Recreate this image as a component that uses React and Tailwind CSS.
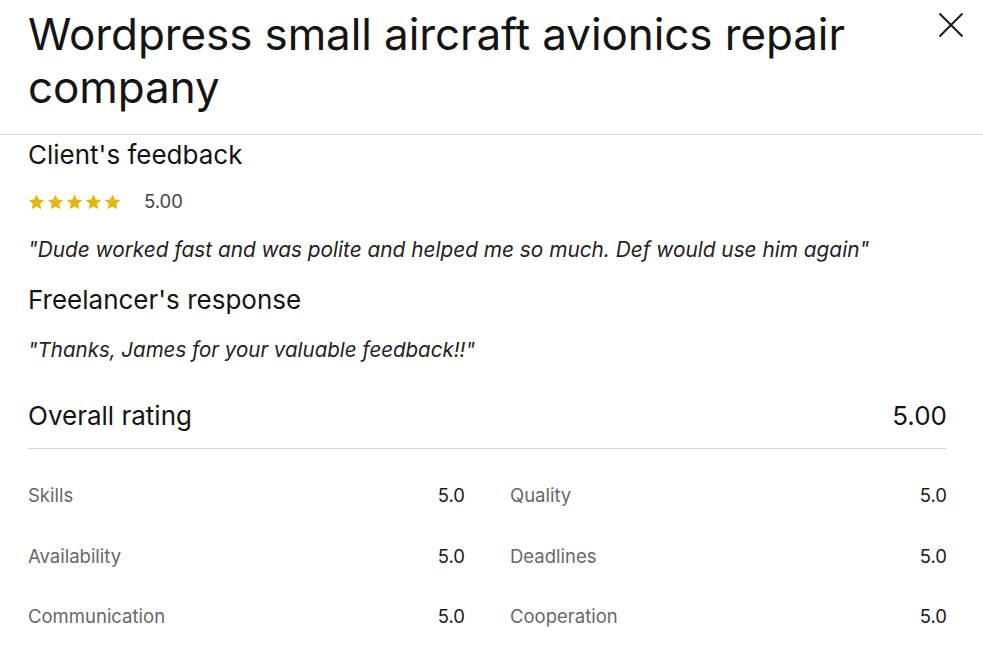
import React from "react";

const Star = () => (
  <svg width="17" height="16" viewBox="0 0 24 23" className="shrink-0">
    <path
      d="M12 0.8l3.3 7.1 7.8 0.9-5.8 5.3 1.6 7.7L12 17.9l-6.9 3.9 1.6-7.7L0.9 8.8l7.8-0.9z"
      fill="#e1b80f"
    />
  </svg>
);

const Row = ({ label, value }) => (
  <div className="flex items-center justify-between h-[60.5px]">
    <span className="text-[18.5px] leading-[26px] text-[#676767]">{label}</span>
    <span className="text-[18.5px] leading-[26px] text-[#1a1a1a]">{value}</span>
  </div>
);

export default function App() {
  return (
    <div
      className="w-[983px] h-[652px] bg-white overflow-hidden text-[#141414]"
      style={{ fontFamily: 'Inter, "Liberation Sans", Arial, sans-serif' }}
    >
      <div className="flex items-start justify-between pl-[28px] pr-[14px] pt-[8px] pb-[20px] border-b border-[#d9d9d9]">
        <h1 className="text-[44px] leading-[53px] tracking-[-0.1px] font-normal text-[#141414] w-[880px]">
          Wordpress small aircraft avionics repair company
        </h1>
        <button className="mt-[-1px] p-1 text-[#141414]">
          <svg width="28" height="28" viewBox="0 0 28 28" fill="none">
            <path d="M2.5 2.5L25.5 25.5M25.5 2.5L2.5 25.5" stroke="#1a1a1a" strokeWidth="2" />
          </svg>
        </button>
      </div>
      <div className="px-[28px] pr-[36px]">
        <h2 className="text-[26px] leading-[30px] mt-[5px]">Client's feedback</h2>
        <div className="flex items-center mt-[19px] gap-[7px]">
          <div className="flex gap-[2px]">
            <Star />
            <Star />
            <Star />
            <Star />
            <Star />
          </div>
          <span className="ml-[16px] text-[18.5px] leading-[25px] text-[#444]">5.00</span>
        </div>
        <p className="italic text-[20.8px] leading-[30px] mt-[21px] text-[#222]">
          "Dude worked fast and was polite and helped me so much. Def would use him again"
        </p>
        <h2 className="text-[26px] leading-[30px] mt-[20px]">Freelancer's response</h2>
        <p className="italic text-[20.5px] leading-[30px] mt-[20px] text-[#222]">
          "Thanks, James for your valuable feedback!!"
        </p>
        <div className="flex items-center justify-between mt-[36px] pb-[17px] border-b border-[#d9d9d9]">
          <span className="text-[26px] leading-[30px]">Overall rating</span>
          <span className="text-[26px] leading-[30px]">5.00</span>
        </div>
        <div className="grid grid-cols-2 gap-x-[45px] mt-[16px]">
          <Row label="Skills" value="5.0" />
          <Row label="Quality" value="5.0" />
          <Row label="Availability" value="5.0" />
          <Row label="Deadlines" value="5.0" />
          <Row label="Communication" value="5.0" />
          <Row label="Cooperation" value="5.0" />
        </div>
      </div>
    </div>
  );
}
